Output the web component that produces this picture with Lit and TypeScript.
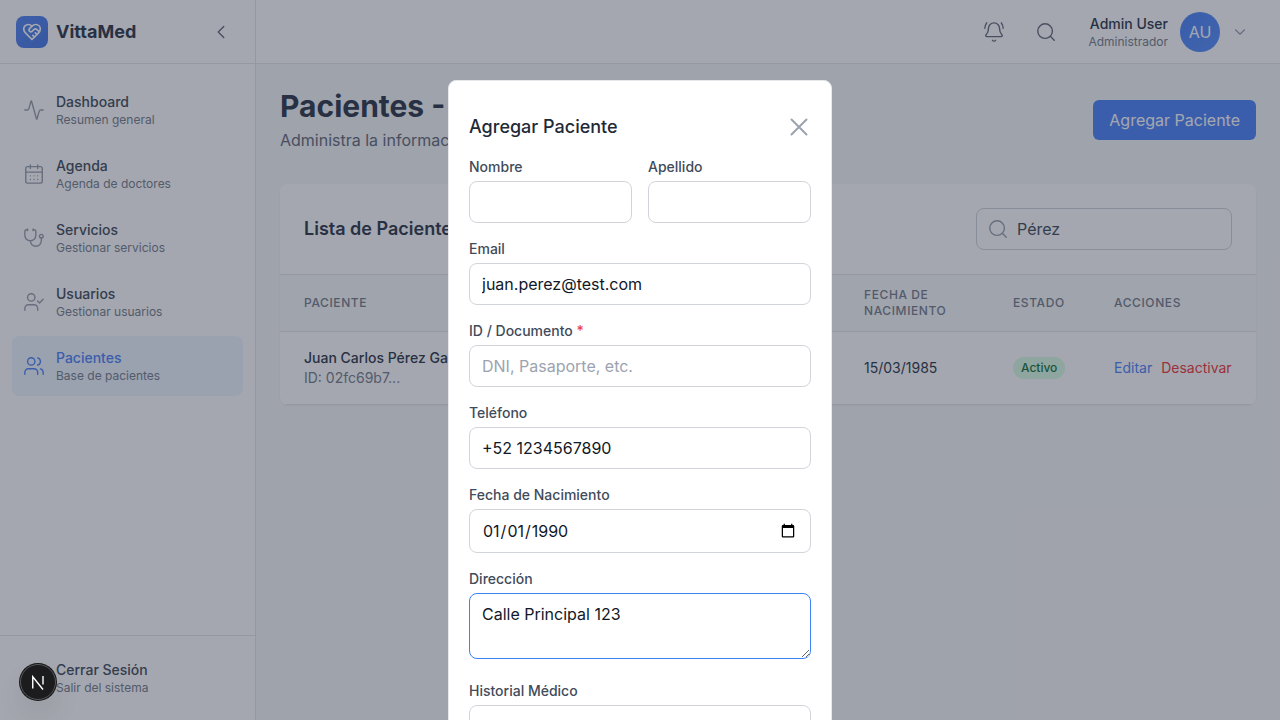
import { LitElement, css, html, svg } from "lit";
import { customElement } from "lit/decorators.js";
import { classMap } from "lit/directives/class-map.js";

const icons = {
  activity: svg`<path d="M22 12h-2.48a2 2 0 0 0-1.93 1.46l-2.35 8.36a.25.25 0 0 1-.48 0L9.24 2.18a.25.25 0 0 0-.48 0l-2.35 8.36A2 2 0 0 1 4.49 12H2"/>`,
  calendar: svg`<path d="M8 2v4M16 2v4"/><rect x="3" y="4" width="18" height="18" rx="2"/><path d="M3 10h18M8 14h.01M12 14h.01M16 14h.01M8 18h.01M12 18h.01M16 18h.01"/>`,
  stethoscope: svg`<path d="M11 2v2M5 2v2M5 3H4a2 2 0 0 0-2 2v4a6 6 0 0 0 12 0V5a2 2 0 0 0-2-2h-1M8 15a6 6 0 0 0 12 0v-3"/><circle cx="20" cy="10" r="2"/>`,
  userCheck: svg`<path d="M16 21v-2a4 4 0 0 0-4-4H6a4 4 0 0 0-4 4v2"/><circle cx="9" cy="7" r="4"/><path d="m16 11 2 2 4-4"/>`,
  users: svg`<path d="M16 21v-2a4 4 0 0 0-4-4H6a4 4 0 0 0-4 4v2"/><circle cx="9" cy="7" r="4"/><path d="M22 21v-2a4 4 0 0 0-3-3.87M16 3.13a4 4 0 0 1 0 7.75"/>`,
  logout: svg`<path d="M9 21H5a2 2 0 0 1-2-2V5a2 2 0 0 1 2-2h4M16 17l5-5-5-5M21 12H9"/>`,
  heart: svg`<path d="M19 14c1.49-1.46 3-3.21 3-5.5A5.5 5.5 0 0 0 16.5 3c-1.76 0-3 .5-4.5 2-1.5-1.5-2.74-2-4.5-2A5.5 5.5 0 0 0 2 8.5c0 2.3 1.5 4.05 3 5.5l7 7Z"/><path d="M12 5 9.04 7.96a2.17 2.17 0 0 0 0 3.08c.82.82 2.13.85 3 .07l2.07-1.9a2.82 2.82 0 0 1 3.79 0l2.96 2.66M18 15l-2-2M15 18l-2-2"/>`,
  bell: svg`<path d="M10.268 21a2 2 0 0 0 3.464 0M22 8c0-2.3-.8-4.3-2-6M3.262 15.326A1 1 0 0 0 4 17h16a1 1 0 0 0 .74-1.673C19.41 13.956 18 12.499 18 8A6 6 0 0 0 6 8c0 4.499-1.411 5.956-2.738 7.326M4 2C2.8 3.7 2 5.7 2 8"/>`,
  search: svg`<circle cx="11" cy="11" r="8"/><path d="m21 21-4.3-4.3"/>`,
  chevronLeft: svg`<path d="m15 18-6-6 6-6"/>`,
  chevronDown: svg`<path d="m6 9 6 6 6-6"/>`,
  close: svg`<path d="M4.5 4.5l15 15M19.5 4.5l-15 15"/>`,
};

function icon(name: keyof typeof icons, size: number, width = 2) {
  return html`<svg width=${size} height=${size} viewBox="0 0 24 24" fill="none" stroke="currentColor" stroke-width=${width} stroke-linecap="round" stroke-linejoin="round">${icons[name]}</svg>`;
}

const nav: { icon: keyof typeof icons, title: string, sub: string, active?: boolean }[] = [
  { icon: "activity", title: "Dashboard", sub: "Resumen general" },
  { icon: "calendar", title: "Agenda", sub: "Agenda de doctores" },
  { icon: "stethoscope", title: "Servicios", sub: "Gestionar servicios" },
  { icon: "userCheck", title: "Usuarios", sub: "Gestionar usuarios" },
  { icon: "users", title: "Pacientes", sub: "Base de pacientes", active: true },
];

@customElement("app-root")
export class AppRoot extends LitElement {
  static styles = css`
    :host {
      display: flex;
      width: 1280px;
      height: 720px;
      overflow: hidden;
      position: relative;
      font-family: Inter, "Liberation Sans", sans-serif;
      background: #f7f8fa;
      color: #111827;
    }

    * { box-sizing: border-box; }

    svg { display: block; flex: none; }

    .sidebar {
      width: 256px;
      flex: none;
      display: flex;
      flex-direction: column;
      background: #fff;
      border-right: 1px solid #e5e7eb;
    }

    .brand {
      height: 64px;
      flex: none;
      display: flex;
      align-items: center;
      padding: 0 23px 0 16px;
      border-bottom: 1px solid #e5e7eb;
    }

    .logo {
      width: 32px;
      height: 32px;
      border-radius: 8px;
      background: linear-gradient(135deg, #5b8cf5, #4f7fe8);
      color: #fff;
      display: flex;
      align-items: center;
      justify-content: center;
    }

    .brand-name {
      flex: 1;
      margin-left: 8px;
      font-size: 18px;
      line-height: 28px;
      font-weight: 700;
      color: #374151;
    }

    .collapse { color: #6b7280; }

    .nav {
      flex: 1;
      display: flex;
      flex-direction: column;
      gap: 4px;
      padding: 16px 12px 0;
    }

    .item {
      display: flex;
      align-items: center;
      gap: 11px;
      height: 60px;
      padding: 0 11px;
      border-radius: 8px;
      color: #9ca3af;
    }

    .item.active {
      background: #eff6ff;
      color: #5589fb;
    }

    .item-title {
      font-size: 14px;
      line-height: 20px;
      font-weight: 500;
      color: #4b5563;
    }

    .item.active .item-title { color: #5589fb; }

    .item-sub {
      font-size: 12px;
      line-height: 16px;
      color: #7d8592;
    }

    .foot {
      flex: none;
      padding: 12px;
      border-top: 1px solid #e5e7eb;
    }

    .content {
      flex: 1;
      min-width: 0;
      display: flex;
      flex-direction: column;
    }

    .topbar {
      height: 64px;
      flex: none;
      display: flex;
      align-items: center;
      justify-content: flex-end;
      gap: 12px;
      padding-right: 31px;
      background: #fff;
      border-bottom: 1px solid #e5e7eb;
    }

    .round-btn {
      width: 40px;
      height: 40px;
      display: flex;
      align-items: center;
      justify-content: center;
      color: #6b7280;
    }

    .user {
      display: flex;
      align-items: center;
      margin-left: 10px;
    }

    .user-text {
      text-align: right;
      margin-right: 12px;
    }

    .user-name {
      font-size: 14px;
      line-height: 20px;
      font-weight: 500;
      color: #374151;
    }

    .user-role {
      font-size: 12px;
      line-height: 16px;
      color: #7d8592;
    }

    .avatar {
      width: 40px;
      height: 40px;
      border-radius: 50%;
      background: linear-gradient(135deg, #5589fb, #5f93fb);
      color: #fff;
      font-size: 16px;
      display: flex;
      align-items: center;
      justify-content: center;
    }

    .user-chevron {
      margin-left: 11px;
      color: #9ca3af;
    }

    .page { padding: 24px; }

    .page-head {
      display: flex;
      align-items: center;
      justify-content: space-between;
      margin-bottom: 32px;
    }

    h1 {
      margin: 0;
      font-size: 30px;
      line-height: 36px;
      font-weight: 700;
      color: #374151;
    }

    .lead {
      margin: 4px 0 0;
      font-size: 16px;
      line-height: 24px;
      color: #6b7280;
    }

    .add-btn {
      height: 40px;
      padding: 0 16px;
      border: 0;
      border-radius: 6px;
      background: #5589fb;
      color: #fff;
      font: 400 16px/24px Inter, "Liberation Sans", sans-serif;
    }

    .card {
      background: #fff;
      border-radius: 8px;
      box-shadow: 0 1px 2px rgba(0, 0, 0, 0.04);
      overflow: hidden;
    }

    .card-head {
      display: flex;
      align-items: center;
      justify-content: space-between;
      padding: 24px;
      border-bottom: 1px solid #e5e7eb;
    }

    h2 {
      margin: 0;
      font-size: 18px;
      line-height: 28px;
      font-weight: 600;
      color: #374151;
    }

    .search {
      width: 256px;
      height: 42px;
      display: flex;
      align-items: center;
      gap: 8px;
      padding-left: 10px;
      border: 1px solid #d1d5db;
      border-radius: 8px;
      font-size: 16px;
      color: #4b5563;
    }

    .search svg { color: #9ca3af; }

    .table-row {
      display: grid;
      grid-template-columns: 560px 149px 101px 1fr;
      align-items: center;
    }

    .table-row > div { padding: 0 24px; }

    .table-row > .actions-cell { padding-right: 0; }

    .thead {
      padding: 12px 0;
      background: #f9fafb;
      border-bottom: 1px solid #e5e7eb;
      font-size: 12px;
      line-height: 16px;
      font-weight: 500;
      letter-spacing: 0.05em;
      text-transform: uppercase;
      color: #7d8592;
    }

    .tbody {
      padding: 16px 0;
      border-bottom: 1px solid #e5e7eb;
      font-size: 14px;
      line-height: 20px;
      color: #374151;
    }

    .patient-name {
      font-weight: 500;
      color: #374151;
    }

    .patient-id { color: #7d8592; }

    .badge {
      display: inline-block;
      padding: 3px 8px;
      border-radius: 999px;
      background: #dcfce7;
      color: #1f7a45;
      font-size: 12px;
      line-height: 16px;
      font-weight: 500;
    }

    .edit { color: #5589fb; margin-right: 9px; }
    .off { color: #ef4444; }

    .overlay {
      position: absolute;
      inset: 0;
      background: rgba(17, 24, 45, 0.38);
    }

    .modal {
      width: 384px;
      margin: 80px auto 0;
      padding: 20px;
      background: #fff;
      border: 1px solid #e5e7eb;
      border-radius: 8px;
    }

    .modal-head {
      height: 52px;
      margin-bottom: 4px;
      display: flex;
      align-items: center;
      justify-content: space-between;
    }

    h3 {
      margin: 0 0 1px;
      font-size: 18px;
      line-height: 28px;
      font-weight: 500;
      color: #1f2937;
    }

    .close { color: #9ca3af; }

    .pair {
      display: grid;
      grid-template-columns: 1fr 1fr;
      gap: 16px;
    }

    .field { margin-bottom: 16px; }

    label {
      display: block;
      margin-bottom: 4px;
      font-size: 14px;
      line-height: 20px;
      font-weight: 500;
      color: #414b5a;
    }

    .req { color: #ef4444; }

    input, textarea {
      width: 100%;
      padding: 8px 12px;
      border: 1px solid #d1d5db;
      border-radius: 8px;
      background: #fff;
      color: #111827;
      font: 400 16px/24px Inter, "Liberation Sans", sans-serif;
      outline: none;
    }

    input::placeholder { color: #9ca3af; }

    textarea { margin: 0 0 2px; vertical-align: baseline; }

    textarea.focus { border-color: #3b82f6; }

    .next-badge {
      position: absolute;
      left: 20px;
      bottom: 20px;
      width: 36px;
      height: 36px;
      border-radius: 50%;
      background: #1c1c1e;
      border: 1px solid #55585c;
      box-shadow: 0 0 0 1px #171717, 0 16px 32px -8px rgba(0, 0, 0, 0.24);
      display: flex;
      align-items: center;
      justify-content: center;
    }
  `;

  private renderItem(it: { icon: keyof typeof icons, title: string, sub: string, active?: boolean }) {
    return html`
      <div class=${classMap({ item: true, active: !!it.active })}>
        ${icon(it.icon, 22, 1.5)}
        <div>
          <div class="item-title">${it.title}</div>
          <div class="item-sub">${it.sub}</div>
        </div>
      </div>
    `;
  }

  protected render() {
    return html`
      <aside class="sidebar">
        <div class="brand">
          <div class="logo">${icon("heart", 20)}</div>
          <div class="brand-name">VittaMed</div>
          <div class="collapse">${icon("chevronLeft", 22, 1.5)}</div>
        </div>
        <nav class="nav">${nav.map((it) => this.renderItem(it))}</nav>
        <div class="foot">${this.renderItem({ icon: "logout", title: "Cerrar Sesión", sub: "Salir del sistema" })}</div>
      </aside>

      <div class="content">
        <header class="topbar">
          <div class="round-btn">${icon("bell", 22, 1.5)}</div>
          <div class="round-btn">${icon("search", 22, 1.5)}</div>
          <div class="user">
            <div class="user-text">
              <div class="user-name">Admin User</div>
              <div class="user-role">Administrador</div>
            </div>
            <div class="avatar">AU</div>
            <div class="user-chevron">${icon("chevronDown", 18, 1.5)}</div>
          </div>
        </header>

        <main class="page">
          <div class="page-head">
            <div>
              <h1>Pacientes - Gestión</h1>
              <p class="lead">Administra la información de tus pacientes</p>
            </div>
            <button class="add-btn">Agregar Paciente</button>
          </div>

          <section class="card">
            <div class="card-head">
              <h2>Lista de Pacientes</h2>
              <div class="search">${icon("search", 22, 1.5)}<span>Pérez</span></div>
            </div>
            <div class="table-row thead">
              <div>Paciente</div>
              <div>Fecha de nacimiento</div>
              <div>Estado</div>
              <div class="actions-cell">Acciones</div>
            </div>
            <div class="table-row tbody">
              <div>
                <div class="patient-name">Juan Carlos Pérez García</div>
                <div class="patient-id">ID: 02fc69b7...</div>
              </div>
              <div>15/03/1985</div>
              <div><span class="badge">Activo</span></div>
              <div class="actions-cell"><span class="edit">Editar</span><span class="off">Desactivar</span></div>
            </div>
          </section>
        </main>
      </div>

      <div class="overlay">
        <div class="modal">
          <div class="modal-head">
            <h3>Agregar Paciente</h3>
            <div class="close">${icon("close", 24, 2)}</div>
          </div>
          <div class="pair field">
            <div><label>Nombre</label><input type="text" /></div>
            <div><label>Apellido</label><input type="text" /></div>
          </div>
          <div class="field"><label>Email</label><input type="email" value="juan.perez@test.com" /></div>
          <div class="field"><label>ID / Documento <span class="req">*</span></label><input type="text" placeholder="DNI, Pasaporte, etc." /></div>
          <div class="field"><label>Teléfono</label><input type="tel" value="+52 1234567890" /></div>
          <div class="field"><label>Fecha de Nacimiento</label><input type="date" value="1990-01-01" /></div>
          <div class="field"><label>Dirección</label><textarea class="focus" rows="2">Calle Principal 123</textarea></div>
          <div class="field"><label>Historial Médico</label><textarea rows="3"></textarea></div>
        </div>
      </div>

      <div class="next-badge">
        <svg width="16" height="16" viewBox="0 0 16 16" fill="none" stroke="#fff" stroke-width="1.4">
          <path d="M2.75 14.5V2.75L13 15.5M13 2v8.5"/>
        </svg>
      </div>
    `;
  }
}
